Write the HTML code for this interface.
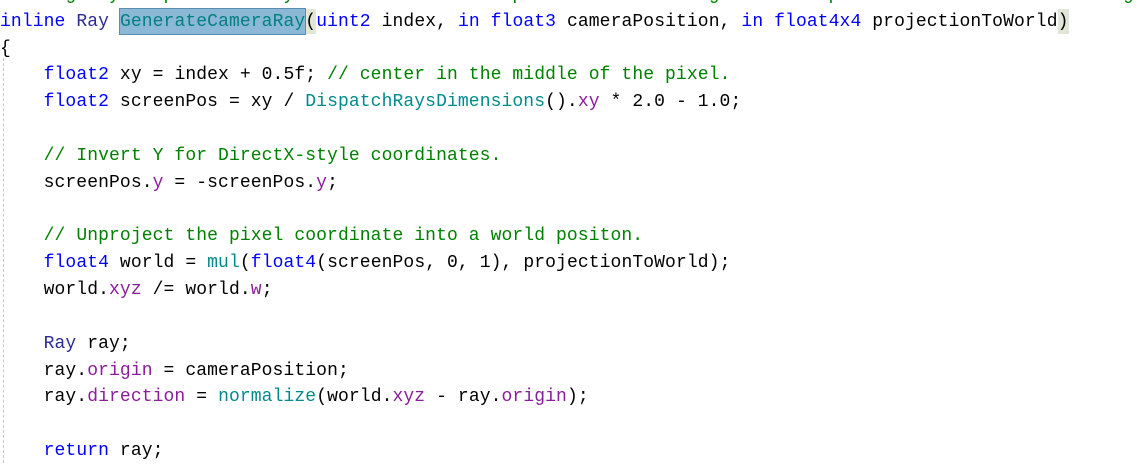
<!DOCTYPE html>
<html><head><meta charset="utf-8"><style>
html,body{margin:0;padding:0;background:#fff;width:1147px;height:463px;overflow:hidden}
pre{position:absolute;left:0;top:-18.2px;margin:0;font-family:"Liberation Mono",monospace;font-size:18px;line-height:26.85px;color:#000;letter-spacing:0.1px}
.k{color:#0000ff}.t{color:#2b2b91}.f{color:#008b8b}.c{color:#008000}.m{color:#8b1c9b}
.sel{background:#8ab8d6;outline:1px solid #5a8db0;color:#00807f;padding:3px 0 2px}
.br{background:#e2e6d6;padding:3px 0 2px}
.guide{position:absolute;left:3px;top:58px;height:405px;border-left:1px dashed #c8c8c8}
</style></head><body>
<div class="guide"></div>
<pre><span class="c">//    g   y    p          y                    p                 g          p                          g</span>
<span class="k">inline</span> <span class="t">Ray</span> <span class="sel">GenerateCameraRay</span><span class="br">(</span><span class="k">uint2</span> index, <span class="k">in</span> <span class="k">float3</span> cameraPosition, <span class="k">in</span> <span class="k">float4x4</span> projectionToWorld<span class="br">)</span>
{
    <span class="k">float2</span> xy = index + 0.5f; <span class="c">// center in the middle of the pixel.</span>
    <span class="k">float2</span> screenPos = xy / <span class="f">DispatchRaysDimensions</span>().<span class="m">xy</span> * 2.0 - 1.0;

    <span class="c">// Invert Y for DirectX-style coordinates.</span>
    screenPos.<span class="m">y</span> = -screenPos.<span class="m">y</span>;

    <span class="c">// Unproject the pixel coordinate into a world positon.</span>
    <span class="k">float4</span> world = <span class="f">mul</span>(<span class="k">float4</span>(screenPos, 0, 1), projectionToWorld);
    world.<span class="m">xyz</span> /= world.<span class="m">w</span>;

    <span class="t">Ray</span> ray;
    ray.<span class="m">origin</span> = cameraPosition;
    ray.<span class="m">direction</span> = <span class="f">normalize</span>(world.<span class="m">xyz</span> - ray.<span class="m">origin</span>);

    <span class="k">return</span> ray;
</pre>
</body></html>
